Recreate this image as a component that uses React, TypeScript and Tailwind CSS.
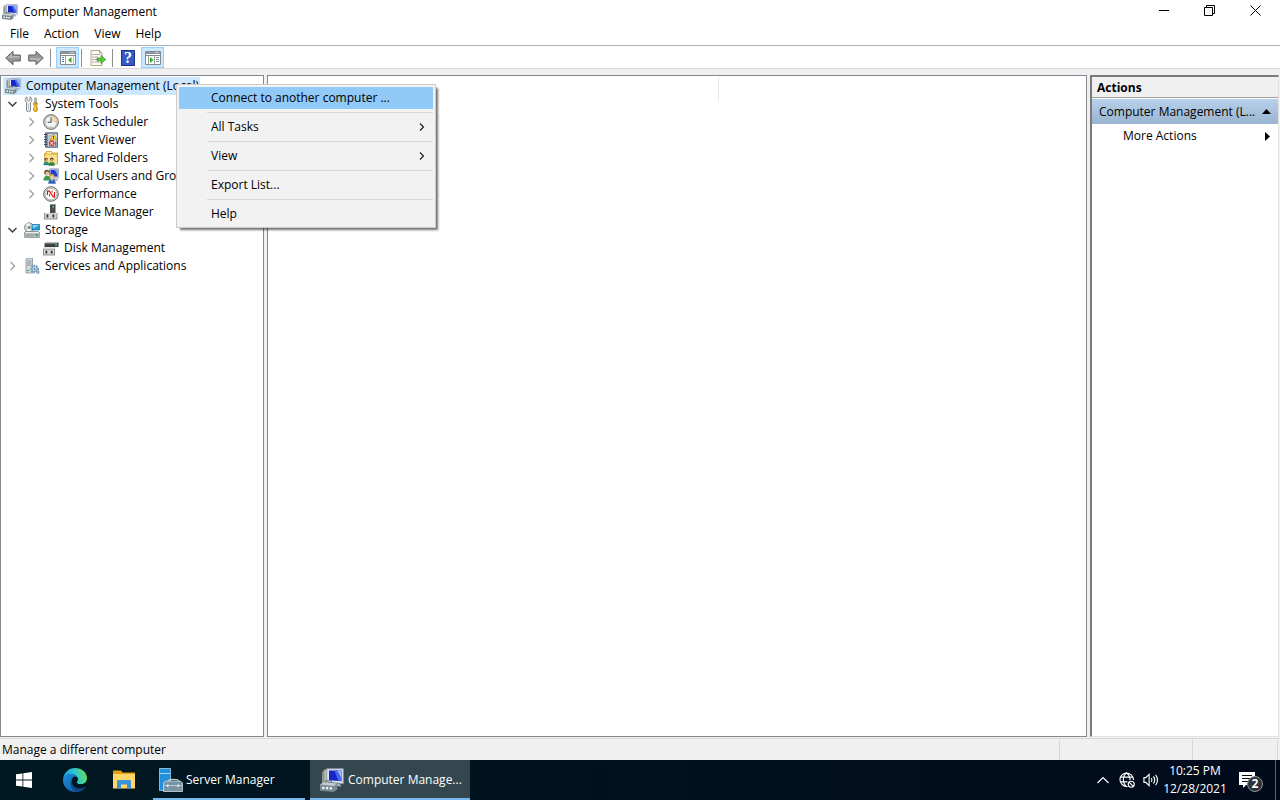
import { ReactNode } from 'react';

interface IconProps {
  className?: string;
}

/* ---------- Icons ---------- */

const ComputerIcon = ({ className = 'size-4' }: IconProps) => (
  <svg viewBox="0 0 16 16" className={`shrink-0 ${className}`} aria-hidden="true">
    <path d="M1.500 3l1.500-2h2.500v9.500h-4z" fill="#b9bdb6" />
    <path d="M1.500 3L3 1v9.500H1.500z" fill="#8d938e" />
    <path d="M4.500.5h11v10l-11-1.300z" fill="#e3e7ed" stroke="#8b98a8" strokeWidth=".6" />
    <path d="M6 1.700h8.300v7.200L6 8.200z" fill="#1527c8" />
    <path d="M9.500 1.700h4.800v7.200l-2-.2z" fill="#4767e6" />
    <path d="M11.500 1.700h2.800v5z" fill="#9db6fa" />
    <path d="M8.500 10l5 .8.7 1.600-5.500-.6z" fill="#a9b4c1" />
    <path d="M0 11L2.500 9.500l9 .8v4L9 16l-9-.9z" fill="#7b8990" />
    <path d="M0 11L2.500 9.500l9 .8L9 12z" fill="#c3cbce" />
    <path d="M4 9.700V8.500h3.500v1.200" fill="none" stroke="#687376" strokeWidth=".8" />
    <path d="M1.500 12.500h1.500V14H1.500zM4 12.700h1.500v1.500H4zM6.500 12.900H8v1.500H6.500z" fill="#f4f7f8" />
  </svg>
);

const ToolsIcon = () => (
  <svg viewBox="0 0 16 16" className="size-4" aria-hidden="true">
    <path
      d="M3 .8v3l1.500 1L6 3.800v-3C8.200 1.800 8.500 5 6.500 6.500V14a2 2 0 0 1-4 0V6.500C.5 5 .8 1.800 3 .8z"
      fill="#eceeef"
      stroke="#777d82"
      strokeWidth=".9"
    />
    <path d="M4.500 7.500V14" stroke="#b4b9bd" strokeWidth=".8" />
    <path d="M10.700 2h1.600v5h-1.600z" fill="#c5c9cc" stroke="#7c8286" strokeWidth=".7" />
    <path d="M9.800 7h3.400v1.800l-.6 1 .9 4c0 2.400-4 2.400-4 0l.9-4-.6-1z" fill="#f0b41c" stroke="#a97407" strokeWidth=".8" />
    <path d="M11 9.800v4.500" stroke="#ffe38a" strokeWidth=".9" />
  </svg>
);

const ClockIcon = () => (
  <svg viewBox="0 0 16 16" className="size-4" aria-hidden="true">
    <circle cx="8" cy="8" r="7.400" fill="#cfcdc7" stroke="#77746c" strokeWidth="1" />
    <circle cx="8" cy="8" r="5.800" fill="#f0f5fa" stroke="#a6a49d" strokeWidth=".5" />
    <path d="M8 8V2.200A5.800 5.800 0 0 1 13.800 8z" fill="#f6dba0" />
    <path d="M8 3.500V8.300H4.800" fill="none" stroke="#4c5a6b" strokeWidth="1.100" />
    <path d="M8 12.200v1M3 8h.8M12.300 8h.8" stroke="#74808c" strokeWidth=".7" />
  </svg>
);

const EventViewerIcon = () => (
  <svg viewBox="0 0 16 16" className="size-4" aria-hidden="true">
    <path d="M2.500.8h12v14.500h-12z" fill="#7d91af" stroke="#46546b" strokeWidth=".8" />
    <path d="M5 1.800h9v12.500H5z" fill="#c9d4e4" />
    <path d="M1 2.500h3M1 5h3M1 7.500h3M1 10h3M1 12.500h3" stroke="#333d4b" strokeWidth=".9" />
    <path d="M5.500 4h3M5.500 6h2M5.500 8h2" stroke="#8496ad" strokeWidth=".7" />
    <path d="M10.500 2l3.300 5.800H7.200z" fill="#ffd83a" stroke="#bb8c00" strokeWidth=".6" />
    <path d="M10.500 3.900v2M10.500 6.400v.8" stroke="#3b2d00" strokeWidth=".9" />
    <circle cx="8.700" cy="11.300" r="2.700" fill="#e4543f" stroke="#a52313" strokeWidth=".5" />
    <path d="M7.500 10.100l2.400 2.400M9.900 10.100l-2.400 2.400" stroke="#fff" strokeWidth=".9" />
    <path d="M12.800 9.500v4.500" stroke="#3970bd" strokeWidth="1.200" />
  </svg>
);

const SharedFolderIcon = () => (
  <svg viewBox="0 0 16 16" className="size-4" aria-hidden="true">
    <path d="M1.500 3.500h1l1-2h5l1 1.500h5v11h-13z" fill="#eac252" stroke="#c49530" strokeWidth=".7" />
    <path d="M4 2.200h4.200v1.300H4z" fill="#fff8dc" />
    <path d="M2 5h12v8.700H2z" fill="#f9df8a" />
    <circle cx="3.200" cy="9.300" r="1.600" fill="#5c4630" />
    <circle cx="3.600" cy="9.900" r="1" fill="#edc297" />
    <path d="M.7 15c0-4.500 5.300-4.500 5.300 0z" fill="#24908d" stroke="#1b6b69" strokeWidth=".4" />
    <circle cx="8.700" cy="9.300" r="1.700" fill="#56422c" />
    <circle cx="8.700" cy="10" r="1.100" fill="#e5b184" />
    <path d="M6 15.500c0-5 5.500-5 5.500 0z" fill="#2f8038" stroke="#235f29" strokeWidth=".4" />
    <path d="M8 11.700h1.500l-.7 1.600z" fill="#fff" />
  </svg>
);

const UsersIcon = () => (
  <svg viewBox="0 0 16 16" className="size-4" aria-hidden="true">
    <path d="M6.500.7h9v9.500l-9-1z" fill="#d8dee6" stroke="#8592a3" strokeWidth=".6" />
    <path d="M7.500 1.800h7v7l-7-.7z" fill="#1f3bd1" />
    <path d="M11.500 1.800h3v5z" fill="#8aa5f6" />
    <path d="M9 10.500l5 .3 1.500 2H9z" fill="#a8b2bd" />
    <circle cx="4" cy="4.500" r="2.800" fill="#6b5136" />
    <circle cx="4.400" cy="5.400" r="1.900" fill="#edc59c" />
    <path d="M.3 12.500c0-6.500 7.500-6.500 7.500 0z" fill="#3d9a50" />
    <circle cx="9" cy="8.300" r="2.500" fill="#c9962c" />
    <circle cx="9" cy="9.100" r="1.800" fill="#f1cda6" />
    <path d="M5.200 15.800c0-6.500 7.600-6.500 7.600 0z" fill="#3566b5" />
    <path d="M8 11.200h2l-1 2z" fill="#fff" />
  </svg>
);

const PerformanceIcon = () => (
  <svg viewBox="0 0 16 16" className="size-4" aria-hidden="true">
    <circle cx="8" cy="8" r="7.300" fill="#d9d9d6" stroke="#696b69" strokeWidth="1" />
    <circle cx="8" cy="8" r="5.800" fill="#fff" stroke="#8e908e" strokeWidth=".5" />
    <path d="M4.500 9V5.200h1.800l4 5.600h1.200V6" fill="none" stroke="#d71414" strokeWidth="1.200" />
    <path d="M6.500 10.500V8M9 6.500V4.500" stroke="#d71414" strokeWidth=".9" />
  </svg>
);

const DeviceManagerIcon = () => (
  <svg viewBox="0 0 16 16" className="size-4" aria-hidden="true">
    <path d="M7 1l1-1h4.500v9H7z" fill="#4a4d4d" />
    <path d="M7 1l1-1h4.500l-1 1z" fill="#90959a" />
    <path d="M9.500 2h1.500v1.800H9.500z" fill="#3bdc4a" />
    <path d="M1 9h13.500v6.500H1z" fill="#8d9093" />
    <path d="M2 9h11.500v5.500H2z" fill="#d4d6d8" />
    <path d="M3.500 10.500h1.800v3H3.500zM9.500 10.500h1.800v3H9.500z" fill="#303335" />
  </svg>
);

const StorageIcon = () => (
  <svg viewBox="0 0 16 16" className="size-4" aria-hidden="true">
    <circle cx="5.200" cy="5.500" r="4.700" fill="#cdd5d6" stroke="#788386" strokeWidth=".8" />
    <path d="M5.200 5.500L2 2.200l3-1.200zM5.200 5.500l1 4-3.500-.8z" fill="#f5fafa" />
    <circle cx="5.200" cy="5.500" r="1.300" fill="#69787b" />
    <path d="M8 2.500h7.500v5.500H8z" fill="#269bd5" stroke="#126c9b" strokeWidth=".7" />
    <path d="M8.500 3h6.500L9 6.500z" fill="#8ad5f4" />
    <path d="M1.500 9.500h13L16 11v3.500c0 .5-.5 1-1 1H1c-.5 0-1-.5-1-1V11z" fill="#b5babc" stroke="#6d7476" strokeWidth=".6" />
    <path d="M1.700 10h12.600l.7 1H1z" fill="#eceeef" />
    <path d="M11.500 12.200h2.500v1.800h-2.500z" fill="#1ebd2c" />
    <path d="M2 13.200h7" stroke="#7b8284" strokeWidth=".7" />
  </svg>
);

const DiskIcon = () => (
  <svg viewBox="0 0 16 16" className="size-4" aria-hidden="true">
    <path d="M1.500 3.500L3.500 2h12v5h-14z" fill="#3c4041" />
    <path d="M1.500 3.500L3.500 2h12l-1.200 1.500z" fill="#b6babc" />
    <path d="M12 4.500h2v1.200h-2z" fill="#41e04a" />
    <path d="M0 8.500h12v7H0z" fill="#8d9093" />
    <path d="M0 8.500l1-1.500h11.500l-.5 1.500z" fill="#e3e5e6" />
    <path d="M1 9.500h10v5H1z" fill="#d4d6d8" />
    <path d="M2.500 10.700h1.800v2.800H2.500zM7.800 10.700h1.800v2.800H7.800z" fill="#303335" />
  </svg>
);

const ServicesIcon = () => (
  <svg viewBox="0 0 16 16" className="size-4" aria-hidden="true">
    <path d="M2 1l1-.8h5.500V15H2z" fill="#d4d9dc" stroke="#858d92" strokeWidth=".8" />
    <path d="M3 3h4.500M3 5h4.500M3 7h4.500" stroke="#778188" strokeWidth=".8" />
    <path d="M3.200 12.500h2" stroke="#3eaf44" strokeWidth="1.200" />
    <circle cx="10.500" cy="11" r="3.600" fill="none" stroke="#6c93b5" strokeWidth="1.600" strokeDasharray="1.500 1.100" />
    <circle cx="10.500" cy="11" r="2.500" fill="#d7e6f2" stroke="#7fa3c2" strokeWidth="1.200" />
    <circle cx="10.500" cy="11" r=".9" fill="#537da2" />
    <circle cx="14" cy="14.300" r="1.300" fill="#b7cadb" stroke="#6c93b5" strokeWidth=".7" />
  </svg>
);

const ArrowIcon = ({ className = '' }: IconProps) => (
  <svg viewBox="0 0 16 16" className={`size-4 ${className}`} aria-hidden="true">
    <path d="M.7 8L8 1.300V5h7.300v6H8v3.700z" fill="#979797" stroke="#626262" strokeWidth="1" strokeLinejoin="round" />
    <path d="M2.500 7.700L7 3.500V6h7.300v1.700z" fill="#b9b9b9" />
  </svg>
);

const PaneIcon = ({ right = false }: { right?: boolean }) => (
  <svg viewBox="0 0 16 14" className="h-3.5 w-4" aria-hidden="true">
    <path d="M.5.5h15v13H.5z" fill="#fff" stroke="#868b90" />
    <path d="M1 1h14v2H1z" fill="#8c9299" />
    <path d="M10.500 1.500h1M12.500 1.500h1" stroke="#fff" />
    <path d="M1 4.500h14" stroke="#868b90" />
    {right ? (
      <>
        <path d="M3.500 5v8M9.500 5v8" stroke="#9a9fa4" />
        <path d="M11 6.500h3M11 8.500h3M11 10.500h3" stroke="#7f8a95" />
        <path d="M5 6l3.500 3L5 12z" fill="#35ac20" />
      </>
    ) : (
      <>
        <path d="M5.500 5v8" stroke="#9a9fa4" />
        <path d="M2 6.500h2M2 8.500h2M2 10.500h2" stroke="#3c7cc0" />
        <path d="M11.500 6L8 9l3.500 3z" fill="#35ac20" />
        <path d="M13.500 5v8" stroke="#b9bdc1" />
      </>
    )}
  </svg>
);

const ExportIcon = () => (
  <svg viewBox="0 0 16 16" className="size-4" aria-hidden="true">
    <path d="M1 .5h8.500l2.500 2.500v12.500H1z" fill="#fffbe9" stroke="#9c9373" strokeWidth=".8" />
    <path d="M9.500.5V3H12" fill="none" stroke="#9c9373" strokeWidth=".8" />
    <path d="M2.500 4.500h1M2.500 7h1M2.500 9.500h1M2.500 12h1" stroke="#555" />
    <path d="M4.500 4.500H10M4.500 7H8M4.500 9.500H7M4.500 12h5" stroke="#9d95b4" strokeWidth=".9" />
    <path d="M7 8h4V5.300L15.800 9.500 11 13.700V11H7z" fill="#55c938" stroke="#2d8f1a" strokeWidth=".6" />
  </svg>
);

const HelpIcon = () => (
  <span className="flex h-4 w-3.5 items-center justify-center border border-[#1c348b] bg-[#3759c4] font-['Liberation_Serif',serif] text-base font-bold text-white">
    ?
  </span>
);

const ChevronIcon = ({ open = false }: { open?: boolean }) => (
  <svg viewBox="0 0 10 10" className="size-2.5" fill="none" strokeWidth="1.500" aria-hidden="true">
    {open ? <path d="M1.500 3l4 4 4-4" stroke="#404040" /> : <path d="M3.500 1l4 4-4 4" stroke="#a6a6a6" />}
  </svg>
);

const WindowsIcon = () => (
  <svg viewBox="0 0 16 16" className="size-4" fill="#fff" aria-hidden="true">
    <path d="M0 2.300L6.500 1.400v6.200H0zM7.300 1.300L16 0v7.600H7.300zM0 8.400h6.500v6.200L0 13.700zM7.300 8.400H16V16l-8.700-1.300z" />
  </svg>
);

const EdgeIcon = () => (
  <svg viewBox="0 0 24 24" className="size-6" aria-hidden="true">
    <defs>
      <linearGradient id="edge-top" x1="0" y1=".5" x2="1" y2=".3">
        <stop offset="0" stopColor="#1b9de2" />
        <stop offset=".5" stopColor="#2bc3d2" />
        <stop offset="1" stopColor="#66e052" />
      </linearGradient>
      <linearGradient id="edge-body" x1="0" y1="0" x2="1" y2="1">
        <stop offset="0" stopColor="#1b8fdc" />
        <stop offset="1" stopColor="#0c59a4" />
      </linearGradient>
    </defs>
    <path d="M0 11.500C.5 4.500 6 0 12 0c7 0 12 4.800 12 10.300 0 3.800-3 6-6.200 6-2.800 0-4-1-4-1.800 0-.7 1-1.200 1-3C14.800 9 12 6.500 8.500 6.500 3.500 6.500.3 9.500 0 11.500z" fill="url(#edge-top)" />
    <path d="M0 12c0-3.200 3.400-6.300 7.800-6.300 3.500 0 5.700 1.800 6.300 3.400-2.600-1.800-5.600.4-5.600 4 0 4.800 4.500 8.700 9.500 8.200C16 23 14 24 12 24 5.400 24 0 18.600 0 12z" fill="url(#edge-body)" />
    <path d="M9.800 10c-3 4.600.4 10.600 6.200 10.600 3 0 5-1.100 6-1.900.4-.3.800 0 .5.500C20.500 22 17 24 13 24 7.500 22 5.500 13.500 9.800 10z" fill="#114a8b" />
    <path d="M14.200 9.300c1.200 2.300-.4 3.700-.4 5.200 0 .8 1.200 1.800 4 1.800 2 0 3.500-.7 4.500-1.600-.8 2.600-3.400 4.300-6.300 4.300-6 0-8-6.700-4-9.800z" fill="#001821" />
  </svg>
);

const ExplorerIcon = () => (
  <svg viewBox="0 0 22 20" className="h-5 w-6" aria-hidden="true">
    <path d="M0 1.500C0 1 .4.500 1 .5h7l1.500 2H22V18H0z" fill="#e2a10e" />
    <path d="M0 4h22v14.500H0z" fill="#ffd668" />
    <path d="M4 11.500c0-.8.700-1.500 1.500-1.500h11c.8 0 1.500.7 1.500 1.500v7h-4v-4H8v4H4z" fill="#3a94db" />
  </svg>
);

const ServerManagerIcon = () => (
  <svg viewBox="0 0 24 24" className="size-6" aria-hidden="true">
    <path d="M.5.5h11v22H.5z" fill="#218fd9" stroke="#bfe3fa" strokeWidth=".7" />
    <path d="M1 5.500h10" stroke="#cdeafb" strokeWidth=".8" />
    <path d="M9.500 13c0-2.300 10-2.300 10 0" fill="none" stroke="#c0ccd3" strokeWidth="1.300" />
    <path d="M6.500 13h15l2 2v8.500H4.500V15z" fill="#7895a6" stroke="#d2dde3" strokeWidth=".8" />
    <path d="M4.500 17.500h19" stroke="#cbd7de" strokeWidth=".8" />
    <path d="M8 16.500h1.500v2.500H8zM18.500 16.500H20v2.500h-1.500z" fill="#e6eef2" />
  </svg>
);

const GlobeIcon = () => (
  <svg viewBox="0 0 17 17" className="size-4" fill="none" stroke="#fff" strokeWidth="1.200" aria-hidden="true">
    <path d="M9 15.500C4.500 15.500 1 12 1 8S4.500 1 8 1s7.500 3 7.500 7.500M8 1C3.500 4 3.500 12 8 15.500M8 1c2.500 1.500 3.700 4.500 3.700 7.500M2 5.500h12.500M1.500 10.500H9" />
    <circle cx="13" cy="13" r="3.200" />
    <path d="M10.700 10.700l4.600 4.600" />
  </svg>
);

const SpeakerIcon = () => (
  <svg viewBox="0 0 17 14" className="h-3.5 w-4" fill="none" stroke="#fff" strokeWidth="1.200" aria-hidden="true">
    <path d="M1 4.500h2L6.500 1v12L3 9.500H1z" />
    <path d="M8.700 5c1 1 1 3 0 4M11 3.300c2 2 2 5.400 0 7.400M13.200 1.500c3 3 3 8 0 11" />
  </svg>
);

/* ---------- Tree ---------- */

interface TreeRowProps {
  label: string;
  icon: ReactNode;
  level: 1 | 2;
  state?: 'open' | 'closed';
}

const TreeRow = ({ label, icon, level, state }: TreeRowProps) => (
  <button
    type="button"
    className={`flex h-[18px] items-center whitespace-nowrap text-left ${level === 2 ? 'pl-[25px]' : 'pl-1.5'}`}
  >
    <span className="w-[17px] shrink-0">{state && <ChevronIcon open={state === 'open'} />}</span>
    {icon}
    <span className="pl-[5px]">{label}</span>
  </button>
);

const systemTools: Omit<TreeRowProps, 'level'>[] = [
  { label: 'Task Scheduler', icon: <ClockIcon />, state: 'closed' },
  { label: 'Event Viewer', icon: <EventViewerIcon />, state: 'closed' },
  { label: 'Shared Folders', icon: <SharedFolderIcon />, state: 'closed' },
  { label: 'Local Users and Groups', icon: <UsersIcon />, state: 'closed' },
  { label: 'Performance', icon: <PerformanceIcon />, state: 'closed' },
  { label: 'Device Manager', icon: <DeviceManagerIcon /> }
];

const ConsoleTree = () => (
  <nav aria-label="Console tree" className="w-[264px] shrink-0 border border-[#828790] bg-white pt-px">
    <button
      type="button"
      className="ml-0.5 flex h-[18px] items-center gap-[5px] whitespace-nowrap bg-[#cce8ff] pl-0.5 pr-px"
    >
      <ComputerIcon />
      Computer Management (Local)
    </button>
    <ul>
      <li>
        <TreeRow level={1} label="System Tools" icon={<ToolsIcon />} state="open" />
        <ul>
          {systemTools.map((item) => (
            <li key={item.label}>
              <TreeRow level={2} {...item} />
            </li>
          ))}
        </ul>
      </li>
      <li>
        <TreeRow level={1} label="Storage" icon={<StorageIcon />} state="open" />
        <TreeRow level={2} label="Disk Management" icon={<DiskIcon />} />
      </li>
      <li>
        <TreeRow level={1} label="Services and Applications" icon={<ServicesIcon />} state="closed" />
      </li>
    </ul>
  </nav>
);

/* ---------- Context menu ---------- */

const menuItems = [
  { label: 'Connect to another computer ...', selected: true },
  { label: 'All Tasks', submenu: true },
  { label: 'View', submenu: true },
  { label: 'Export List...' },
  { label: 'Help' }
];

const ContextMenu = () => (
  <div
    role="menu"
    className="absolute left-[176px] top-[15px] w-[260px] border border-[#ccc] bg-[#f2f2f2] px-0.5 py-0.5 shadow-[3px_3px_2px_-1px_rgba(0,0,0,0.55)]"
  >
    {menuItems.map((item, index) => (
      <div key={item.label}>
        {index > 0 && (
          <div className="py-[3px] pl-7">
            <div className="h-px bg-[#d7d7d7]" />
          </div>
        )}
        <button
          type="button"
          role="menuitem"
          className={`flex h-[22px] w-full items-center justify-between pl-8 pr-1.5 ${item.selected ? 'bg-[#91c9f7]' : ''}`}
        >
          {item.label}
          {item.submenu && (
            <svg viewBox="0 0 8 8" className="size-2" fill="none" stroke="#222" strokeWidth="1.200" aria-hidden="true">
              <path d="M1 .5L4.500 4 1 7.500" />
            </svg>
          )}
        </button>
      </div>
    ))}
  </div>
);

/* ---------- Window chrome ---------- */

const TitleBar = () => (
  <header className="flex h-6 items-center bg-white pl-0.5 pr-0.5">
    <ComputerIcon />
    <h1 className="flex-1 pl-[5px]">Computer Management</h1>
    <div className="flex h-full pb-[3px]">
      <button type="button" aria-label="Minimize" className="flex w-[46px] items-center justify-center">
        <svg viewBox="0 0 11 11" className="size-[11px]" aria-hidden="true">
          <path d="M1 5.500h10" stroke="#000" />
        </svg>
      </button>
      <button type="button" aria-label="Restore" className="flex w-[46px] items-center justify-center">
        <svg viewBox="0 0 11 11" className="size-[11px]" fill="none" stroke="#000" aria-hidden="true">
          <path d="M.5 2.500h8v8h-8zM2.500 2.500v-2h8v8h-2" />
        </svg>
      </button>
      <button type="button" aria-label="Close" className="flex w-[46px] items-center justify-center">
        <svg viewBox="0 0 11 11" className="size-[11px]" fill="none" stroke="#000" aria-hidden="true">
          <path d="M.5.5l10 10M10.500.5l-10 10" />
        </svg>
      </button>
    </div>
  </header>
);

const ToolSeparator = () => <div className="h-[18px] w-px bg-[#8d8d8d]" />;

const Toolbar = () => (
  <div role="toolbar" aria-label="Standard" className="flex h-[23px] items-center border-b border-[#d9d9d9] bg-white pl-[5px] pt-px">
    <button type="button" aria-label="Back">
      <ArrowIcon />
    </button>
    <button type="button" aria-label="Forward" className="pl-[7px] pr-1.5">
      <ArrowIcon className="rotate-180" />
    </button>
    <ToolSeparator />
    <button
      type="button"
      aria-label="Show or hide console tree"
      className="ml-[5px] mr-0.5 flex h-[21px] w-[23px] items-center justify-center border border-[#99d1ff] bg-[#cce8ff]"
    >
      <PaneIcon />
    </button>
    <ToolSeparator />
    <button type="button" aria-label="Export list" className="pl-2 pr-1.5">
      <ExportIcon />
    </button>
    <ToolSeparator />
    <button type="button" aria-label="Help" className="pl-2 pr-1.5">
      <HelpIcon />
    </button>
    <button
      type="button"
      aria-label="Show or hide action pane"
      className="flex h-[21px] w-[23px] items-center justify-center border border-[#99d1ff] bg-[#cce8ff]"
    >
      <PaneIcon right />
    </button>
  </div>
);

const ActionsPane = () => (
  <aside className="flex w-[189px] shrink-0 flex-col border-b border-l-2 border-r border-t-2 border-b-[#e3e3e3] border-l-[#7a7a7a] border-r-[#e3e3e3] border-t-[#7a7a7a] bg-white">
    <h2 className="flex h-[21px] items-center border-b border-[#a0a0a0] bg-[#f0f0f0] pl-[5px] pt-0.5 font-bold">Actions</h2>
    <button
      type="button"
      className="mt-px flex h-[25px] items-center justify-between bg-linear-to-b from-[#b9d1ea] to-[#99b4d1] pl-[7px] pr-[7px]"
    >
      Computer Management (L...
      <svg viewBox="0 0 9 5" className="h-[5px] w-[9px]" aria-hidden="true">
        <path d="M0 5L4.500 0 9 5z" />
      </svg>
    </button>
    <button type="button" className="flex h-6 items-center justify-between pl-[31px] pr-2">
      More Actions
      <svg viewBox="0 0 5 9" className="h-[9px] w-[5px]" aria-hidden="true">
        <path d="M0 0l5 4.500L0 9z" />
      </svg>
    </button>
  </aside>
);

const Taskbar = () => (
  <footer className="flex h-10 items-stretch bg-linear-to-r from-[#001821] to-[#010a1b] text-white">
    <button type="button" aria-label="Start" className="flex w-12 items-center justify-center">
      <WindowsIcon />
    </button>
    <button type="button" aria-label="Microsoft Edge" className="flex w-[54px] items-center justify-center">
      <EdgeIcon />
    </button>
    <button type="button" aria-label="File Explorer" className="flex w-11 items-center justify-center">
      <ExplorerIcon />
    </button>
    <button type="button" className="ml-[7px] flex w-[152px] items-center gap-[3px] border-b-2 border-[#76b9ed] pl-1.5 pt-0.5">
      <ServerManagerIcon />
      Server Manager
    </button>
    <button type="button" className="ml-[5px] flex w-40 items-center gap-1 border-b-2 border-[#76b9ed] bg-[#34474f] pl-2.5 pt-0.5">
      <ComputerIcon className="size-6" />
      Computer Manage...
    </button>
    <div className="ml-auto flex items-center">
      <button type="button" aria-label="Show hidden icons" className="pr-2.5">
        <svg viewBox="0 0 12 8" className="h-2 w-3" fill="none" stroke="#fff" strokeWidth="1.200" aria-hidden="true">
          <path d="M.5 7L6 1.500 11.500 7" />
        </svg>
      </button>
      <button type="button" aria-label="Network" className="pr-2">
        <GlobeIcon />
      </button>
      <button type="button" aria-label="Volume">
        <SpeakerIcon />
      </button>
      <button type="button" className="w-[72px] text-center leading-[18px]">
        <time className="block">10:25 PM</time>
        <time className="block">12/28/2021</time>
      </button>
      <button type="button" aria-label="2 notifications" className="relative ml-2 h-6 w-9">
        <svg viewBox="0 0 16 16" className="size-4" aria-hidden="true">
          <path d="M0 0h16v13H7l-3 3v-3H0z" fill="#fff" />
          <path d="M3 3.500h10M3 6.500h10M3 9.500h6" stroke="#010a1b" />
        </svg>
        <span className="absolute left-2 top-2 flex size-4 items-center justify-center rounded-full border border-[#8b9095] bg-[#2d3237] font-bold">
          2
        </span>
      </button>
      <button type="button" aria-label="Show desktop" className="h-10 w-[5px] border-l border-[#5d646f]" />
    </div>
  </footer>
);

export default function App() {
  return (
    <div className="flex min-h-screen flex-col bg-[#f0f0f0] font-['Open_Sans','Noto_Sans',sans-serif] text-xs text-black">
      <TitleBar />
      <nav aria-label="Menu bar" className="flex h-[22px] items-center border-b border-[#b0b0b5] bg-white pb-0.5 pl-0.5">
        <button type="button" className="pl-2 pr-[7px]">File</button>
        <button type="button" className="pl-2 pr-[7px]">Action</button>
        <button type="button" className="pl-2 pr-[7px]">View</button>
        <button type="button" className="pl-2 pr-[7px]">Help</button>
      </nav>
      <Toolbar />
      <main className="relative flex flex-1 gap-[3px] pb-px pr-px pt-1.5">
        <ConsoleTree />
        <section aria-label="Details" className="min-w-0 flex-1 border border-[#828790] bg-white pt-px">
          <div className="h-6 w-[451px] border-r border-[#e5e5e5]" />
        </section>
        <ActionsPane />
        <ContextMenu />
      </main>
      <div role="status" className="flex h-[22px] items-center border-t border-[#d7d7d7] pl-0.5 pr-0.5">
        <span className="flex-1">Manage a different computer</span>
        <span className="h-5 w-[133px] border-l border-[#d7d7d7]" />
        <span className="h-5 w-[86px] border-x border-[#d7d7d7]" />
      </div>
      <Taskbar />
    </div>
  );
}
